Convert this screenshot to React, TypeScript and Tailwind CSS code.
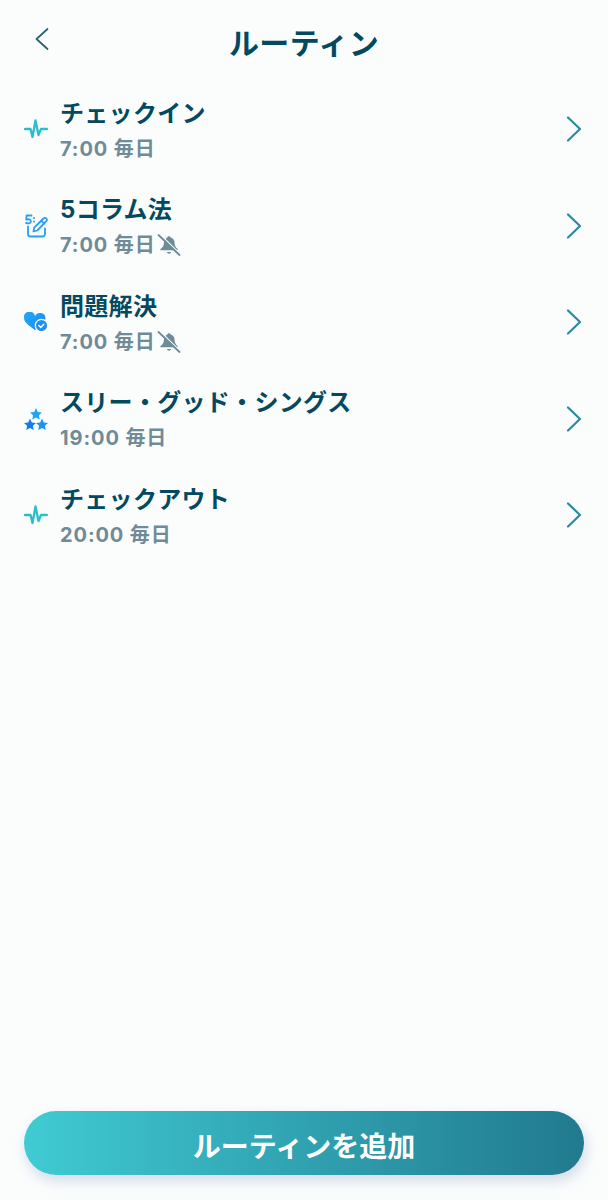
import React from "react";

function Pulse({ id }: { id: string }) {
  return (
    <svg width="26" height="22" viewBox="0 0 26 22" fill="none">
      <defs>
        <linearGradient id={id} x1="0" y1="0" x2="26" y2="0" gradientUnits="userSpaceOnUse">
          <stop offset="0" stopColor="#2fb8c6" />
          <stop offset="1" stopColor="#22c6d6" />
        </linearGradient>
      </defs>
      <path d="M1 11h5.500l2 8 3-16.500 3 14.500 2.500-6h6" stroke={`url(#${id})`} strokeWidth="2.300" strokeLinecap="round" strokeLinejoin="round" />
    </svg>
  );
}

function Pencil() {
  return (
    <svg width="24" height="24" viewBox="0 0 24 24" fill="none" stroke="#2a9df4" strokeWidth="1.800" strokeLinecap="round" strokeLinejoin="round">
      <path d="M7.500 1.500H2.600L2.200 5.700c1.800-.9 4.700-.4 4.700 1.700 0 2-2.800 2.600-4.900 1.500" />
      <path d="M10 4v.2M10 7.500v.2" />
      <path d="M4 12.500v7.500A2.500 2.500 0 0 0 6.500 22.500h12a2.500 2.500 0 0 0 2.500-2.500v-5.500" />
      <path d="M9.500 17.500l.7-3.800L19.500 4.500a1.900 1.900 0 0 1 2.900 2.700L13.300 16.500z" />
      <path d="M17.300 6.800l2.900 2.700" />
    </svg>
  );
}

function HeartCheck() {
  return (
    <svg width="24" height="20" viewBox="0 0 24 20">
      <defs>
        <linearGradient id="hg" x1="0" y1="0" x2="24" y2="20" gradientUnits="userSpaceOnUse">
          <stop offset="0" stopColor="#22a8f7" />
          <stop offset="1" stopColor="#1a84f0" />
        </linearGradient>
      </defs>
      <path d="M11 18C5 13.500 0 10.500 0 6a5.500 5.500 0 0 1 11-1.800A5.500 5.500 0 0 1 21.500 6c0 4.500-5 8-10.500 12z" fill="url(#hg)" />
      <circle cx="17.500" cy="13.500" r="6.200" fill="#1f90f2" stroke="#fbfdfd" strokeWidth="1.300" />
      <path d="M14.800 13.600l2 1.900 3-3.200" fill="none" stroke="#fff" strokeWidth="1.400" strokeLinecap="round" strokeLinejoin="round" />
    </svg>
  );
}

const STAR = "M6 0l1.800 3.900 4.200.5-3.100 2.900.8 4.200L6 9.400 2.300 11.500l.8-4.200L0 4.400l4.200-.5z";

function Stars() {
  return (
    <svg width="24" height="22" viewBox="0 0 24 22">
      <path d={STAR} transform="translate(6 0)" fill="#1ea7f8" />
      <path d={STAR} transform="translate(0 10.500)" fill="#1679ee" />
      <path d={STAR} transform="translate(12 10.500)" fill="#1d92f4" />
    </svg>
  );
}

function BellOff() {
  return (
    <svg width="24" height="22" viewBox="0 0 24 22" fill="none">
      <path d="M12 2.200c.9 0 1.500.6 1.600 1.400 2.600.7 4 2.900 4 5.400 0 2.600.9 4.200 3 5.900v1.300H3.400v-1.300C6 13.200 6.900 11.600 6.900 9c0-2.500 1.500-4.700 3.500-5.400.1-.8.700-1.400 1.600-1.400z" fill="#6f8b97" />
      <path d="M9.800 18a2.300 2.300 0 0 0 4.400 0z" fill="#6f8b97" />
      <path d="M3 0.500l19.500 19" stroke="#fbfdfd" strokeWidth="1.600" />
      <path d="M1.500 1l21 20" stroke="#6f8b97" strokeWidth="1.800" strokeLinecap="round" />
    </svg>
  );
}

function Chevron() {
  return (
    <svg width="16" height="26" viewBox="0 0 16 26" fill="none">
      <path d="M2 1.500L14 13 2 24.500" stroke="#2b8a9e" strokeWidth="2.200" strokeLinecap="round" strokeLinejoin="round" />
    </svg>
  );
}

const rows = [
  { title: "チェックイン", sub: "7:00 毎日", icon: <Pulse id="p1" />, muted: false },
  { title: "5コラム法", sub: "7:00 毎日", icon: <Pencil />, muted: true },
  { title: "問題解決", sub: "7:00 毎日", icon: <HeartCheck />, muted: true },
  { title: "スリー・グッド・シングス", sub: "19:00 毎日", icon: <Stars />, muted: false },
  { title: "チェックアウト", sub: "20:00 毎日", icon: <Pulse id="p2" />, muted: false },
];

export default function App() {
  return (
    <div className="flex h-[1200px] w-[608px] flex-col overflow-hidden bg-[#fbfdfd] font-['Inter','Noto_Sans_CJK_JP',sans-serif]">
      <header className="relative flex h-[81px] shrink-0 items-center justify-center pt-[5px]">
        <button className="absolute left-[35px] top-[28px] flex">
          <svg width="14" height="22" viewBox="0 0 14 22" fill="none">
            <path d="M12.500 1L1.500 11l11 10" stroke="#2a6072" strokeWidth="1.700" strokeLinecap="round" strokeLinejoin="round" />
          </svg>
        </button>
        <h1 className="text-[30px] font-bold leading-[40px] tracking-[0.4px] text-[#034a60]">ルーティン</h1>
      </header>

      <ul className="flex flex-col">
        {rows.map((r) => (
          <li key={r.title} className="flex h-[96.5px] items-center pl-[24px] pr-[26px]">
            <div className="flex w-[36px] shrink-0 items-center">{r.icon}</div>
            <div className="flex min-w-0 flex-1 flex-col pt-[3px]">
              <div className="h-[36px] text-[24px] font-bold leading-[32px] tracking-[0.3px] text-[#034a60]">{r.title}</div>
              <div className="flex h-[30px] items-center gap-[1px] text-[20px] font-bold leading-[30px] tracking-[0.9px] text-[#6f8b97]">
                <span>{r.sub}</span>
                {r.muted && <BellOff />}
              </div>
            </div>
            <Chevron />
          </li>
        ))}
      </ul>

      <div className="mt-auto px-[24px] pb-[25px]">
        <button className="h-[64px] w-full rounded-[32px] bg-gradient-to-r from-[#40cbd3] to-[#217a8f] pt-[7px] text-[28px] font-semibold text-white shadow-[2px_6px_14px_rgba(90,120,170,0.25)]">
          ルーティンを追加
        </button>
      </div>
    </div>
  );
}
